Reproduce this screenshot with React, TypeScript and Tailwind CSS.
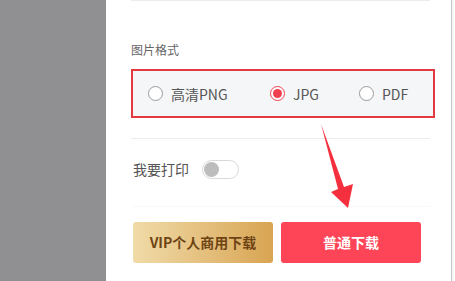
import React from "react";

const FONT = { fontFamily: '"Microsoft YaHei", "Noto Sans CJK SC", "Noto Sans", sans-serif' };

function Radio({ label, checked }: { label: string; checked?: boolean }) {
  return (
    <label className="flex items-center gap-[8px]">
      <span
        className={
          checked
            ? "flex h-[15px] w-[15px] items-center justify-center rounded-full border border-[#f0404f] bg-white"
            : "h-[15px] w-[15px] rounded-full border border-[#9a9a9a] bg-white"
        }
      >
        {checked && <span className="h-[9px] w-[9px] rounded-full bg-[#f0404f]" />}
      </span>
      <span className="text-[14px] leading-[20px] text-[#555]">{label}</span>
    </label>
  );
}

export default function App() {
  return (
    <div className="relative flex h-[281px] w-[455px] overflow-hidden bg-white" style={FONT}>
      <div className="w-[106px] shrink-0 bg-[#909093]" />

      <div className="w-[346px] shrink-0 border-r border-[#c4c4c4] bg-white">
        <div className="ml-[25px] w-[299px]">
          <div className="h-px bg-[#ececec]" />

          <div className="mt-[41px] text-[12px] leading-[16px] text-[#666]">图片格式</div>

          <div className="mt-[11px] flex h-[49px] w-[304px] items-center border-2 border-[#e23a3f] bg-[#f5f6f8] pl-[15px]">
            <div className="w-[122px]">
              <Radio label="高清PNG" />
            </div>
            <div className="w-[89px]">
              <Radio label="JPG" checked />
            </div>
            <Radio label="PDF" />
          </div>

          <div className="mt-[20px] h-px bg-[#ececec]" />

          <div className="mt-[21px] flex h-[19px] items-center gap-[13px] pl-[2px]">
            <span className="text-[14px] leading-[19px] text-[#555]">我要打印</span>
            <span className="flex h-[19px] w-[37px] items-center rounded-full border border-[#d9d9d9] bg-white">
              <span className="ml-[1px] h-[15px] w-[15px] rounded-full bg-[#bdbdbd]" />
            </span>
          </div>

          <div className="mt-[27px] h-px bg-[#f9f9f9]" />

          <div className="ml-[2px] mt-[15px] flex gap-[8px]">
            <button className="h-[41px] w-[140px] rounded-[3px] bg-gradient-to-r from-[#f0dba8] to-[#d8a552] text-[14px] font-bold text-[#6e4414]">
              VIP个人商用下载
            </button>
            <button className="h-[41px] w-[140px] rounded-[3px] bg-[#fd4557] text-[14px] font-bold text-white">
              普通下载
            </button>
          </div>
        </div>
      </div>

      <div className="w-[2px] bg-[#f7f7f7]" />

      <svg className="pointer-events-none absolute inset-0" width="455" height="281" viewBox="0 0 455 281">
        <polygon points="321,124 344,187 353,184 348,208 331,192 338,189" fill="#f5303e" />
      </svg>
    </div>
  );
}
